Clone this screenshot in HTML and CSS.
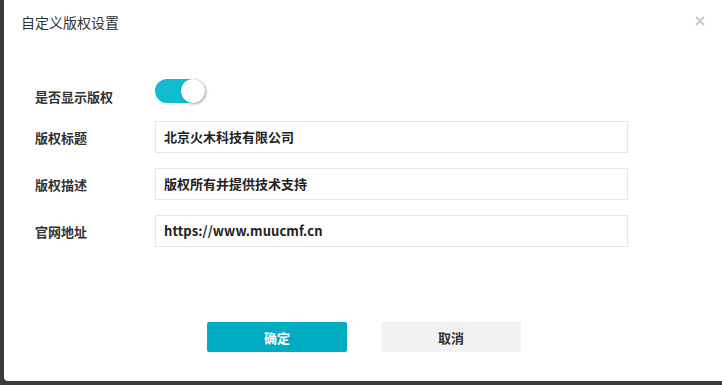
FILE: index.html
```html
<!DOCTYPE html>
<html lang="zh">
<head>
<meta charset="utf-8">
<link rel="stylesheet" href="styles.css">
</head>
<body>
<div class="dialog">
  <div class="header">
    <span class="title">自定义版权设置</span>
    <svg class="close" width="10" height="10" viewBox="0 0 10 10"><path d="M1 1L9 9M9 1L1 9" stroke="#c9c9c9" stroke-width="2" fill="none"/></svg>
  </div>
  <div class="form">
    <div class="row row-switch">
      <label class="label">是否显示版权</label>
      <div class="switch"><span class="knob"></span></div>
    </div>
    <div class="row">
      <label class="label">版权标题</label>
      <div class="input">北京火木科技有限公司</div>
    </div>
    <div class="row">
      <label class="label">版权描述</label>
      <div class="input">版权所有并提供技术支持</div>
    </div>
    <div class="row">
      <label class="label">官网地址</label>
      <div class="input url">https://www.muucmf.cn</div>
    </div>
  </div>
  <div class="footer">
    <button class="btn btn-primary">确定</button>
    <button class="btn btn-default">取消</button>
  </div>
</div>
</body>
</html>
```
FILE: styles.css
```css
html, body {
  margin: 0;
  padding: 0;
  width: 722px;
  height: 385px;
  overflow: hidden;
  background: #3b3b3b;
  font-family: "Noto Sans CJK SC", "Noto Sans", sans-serif;
}
.dialog {
  margin-left: 4px;
  width: 718px;
  height: 381px;
  background: #fff;
  border-radius: 0 0 0 4px;
  display: flex;
  flex-direction: column;
}
.header {
  height: 44px;
  display: flex;
  align-items: center;
  justify-content: space-between;
  padding: 0 17px 0 17px;
}
.title {
  font-size: 14px;
  color: #333;
  line-height: 20px;
}
.close {
  margin-top: -2px;
}
.form {
  padding: 37px 0 0 31px;
  display: flex;
  flex-direction: column;
  gap: 15px;
}
.row {
  display: flex;
  align-items: center;
  height: 32px;
}
.row-switch {
  margin-bottom: -7px;
  align-items: flex-start;
}
.row-switch .label {
  line-height: 32px;
}
.label {
  width: 120px;
  font-size: 13px;
  font-weight: 600;
  color: #333;
}
.switch {
  margin-top: -2px;
  width: 50px;
  height: 24px;
  border-radius: 12px;
  background: #12bccf;
  position: relative;
}
.knob {
  position: absolute;
  right: 0;
  top: 0;
  width: 24px;
  height: 24px;
  border-radius: 50%;
  background: #fff;
  box-shadow: 1px 1px 3px rgba(0,0,0,0.35);
}
.input {
  box-sizing: border-box;
  width: 473px;
  height: 32px;
  border: 1px solid #e6e6e6;
  padding: 0 8px;
  font-size: 13px;
  font-weight: 700;
  color: #222;
  line-height: 30px;
}
.url {
  letter-spacing: 0.1px;
}
.footer {
  margin-top: 75px;
  padding-left: 2px;
  display: flex;
  justify-content: center;
  gap: 34px;
}
.btn {
  width: 140px;
  height: 30px;
  border: none;
  border-radius: 2px;
  font-family: "Noto Sans CJK SC", sans-serif;
  font-size: 13px;
  font-weight: 700;
  padding: 0;
}
.btn-primary {
  background: #00acc1;
  color: #fff;
}
.btn-default {
  background: #f2f2f2;
  color: #333;
}
```
